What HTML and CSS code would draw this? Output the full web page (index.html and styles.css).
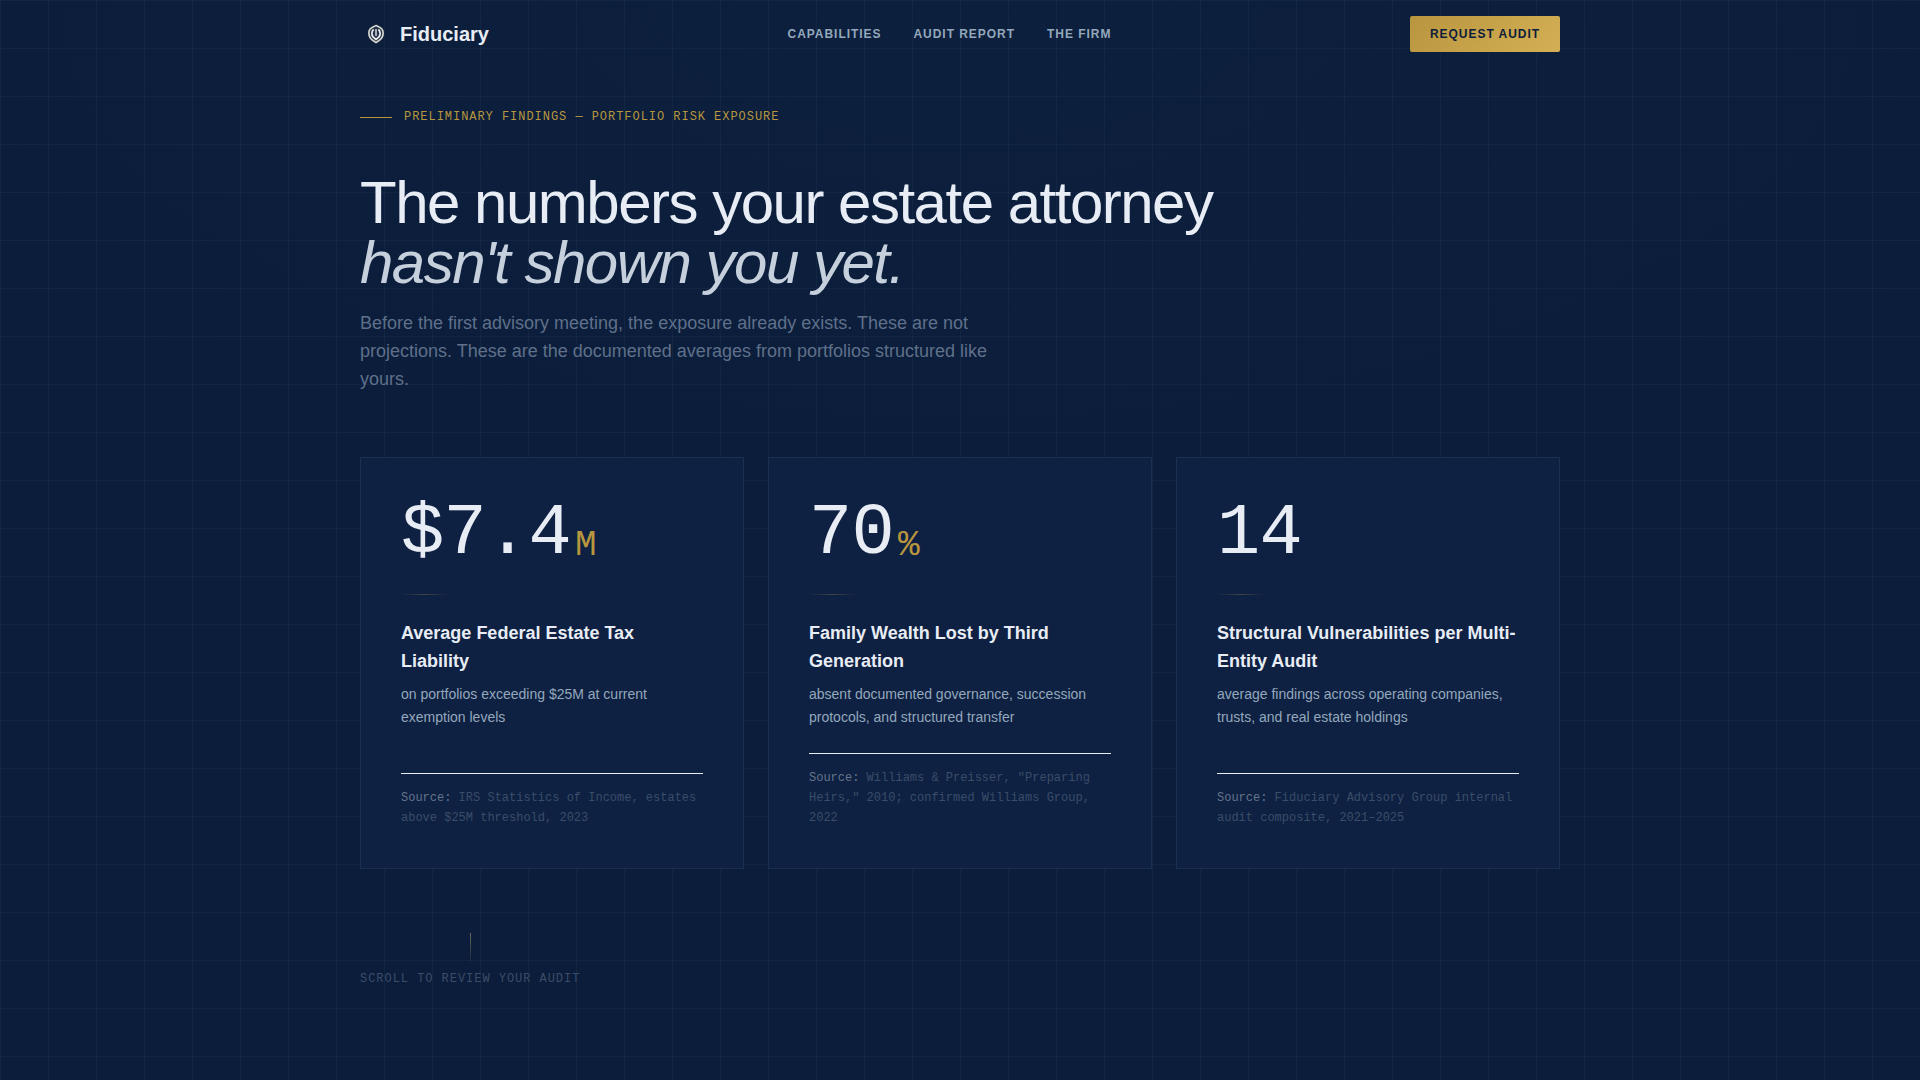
FILE: index.html
```html
<!DOCTYPE html>
<html lang="en">
<head>
<meta charset="utf-8">
<meta name="viewport" content="width=device-width, initial-scale=1">
<title>Fiduciary</title>
<link rel="stylesheet" href="styles.css">
</head>
<body>
<header class="container site-header">
  <a class="brand" href="#top">
    <svg class="brand-mark" viewBox="0 0 32 32" aria-hidden="true">
      <path d="M16 6.500l3.500 1.500c3 1.200 4.700 3.800 4.700 7 0 3.800-2 6.800-5 8.800L16 25.800l-3.200-2c-3-2-5-5-5-8.800 0-3.200 1.700-5.800 4.700-7z" fill="#22304a"/>
      <path d="M16 7.600l3.100 1.400c2.600 1.100 4 3.300 4 6 0 3.400-1.700 6-4.400 7.800L16 24.500l-2.700-1.700c-2.700-1.800-4.400-4.400-4.400-7.800 0-2.700 1.400-4.900 4-6z" fill="none" stroke="#d2d3c9" stroke-width="1.700"/>
      <path d="M13.600 11.500c-2.200 1.800-2.300 5.700-.3 7.700L16 21.300l2.700-2.100c2-2 1.900-5.900-.3-7.700" fill="none" stroke="#f1f3f3" stroke-width="1.700"/>
      <path d="M16 11v7" fill="none" stroke="#f1f3f3" stroke-width="1.300"/>
    </svg>
    <span>Fiduciary</span>
  </a>
  <nav class="site-nav" aria-label="Main">
    <a href="#capabilities">Capabilities</a>
    <a href="#audit">Audit Report</a>
    <a href="#firm">The Firm</a>
  </nav>
  <button class="cta" type="button">Request Audit</button>
</header>

<main class="container hero" id="top">
  <p class="eyebrow">Preliminary Findings — Portfolio Risk Exposure</p>
  <h1>The numbers your estate attorney<br><em>hasn't shown you yet.</em></h1>
  <p class="lede">Before the first advisory meeting, the exposure already exists. These are not projections. These are the documented averages from portfolios structured like yours.</p>

  <section class="cards" id="audit" aria-label="Findings">
    <article class="card">
      <p class="figure">$7.4<span class="unit">M</span></p>
      <h2>Average Federal Estate Tax Liability</h2>
      <p class="detail">on portfolios exceeding $25M at current exemption levels</p>
      <p class="source"><span class="source-label">Source:</span> IRS Statistics of Income, estates above $25M threshold, 2023</p>
    </article>
    <article class="card">
      <p class="figure">70<span class="unit">%</span></p>
      <h2>Family Wealth Lost by Third Generation</h2>
      <p class="detail">absent documented governance, succession protocols, and structured transfer</p>
      <p class="source"><span class="source-label">Source:</span> Williams &amp; Preisser, "Preparing Heirs," 2010; confirmed Williams Group, 2022</p>
    </article>
    <article class="card">
      <p class="figure">14</p>
      <h2>Structural Vulnerabilities per Multi-Entity Audit</h2>
      <p class="detail">average findings across operating companies, trusts, and real estate holdings</p>
      <p class="source"><span class="source-label">Source:</span> Fiduciary Advisory Group internal audit composite, 2021–2025</p>
    </article>
  </section>

  <p class="scroll-cue">Scroll to review your audit</p>
</main>
</body>
</html>
```
FILE: styles.css
```css
:root {
  --gold: #b8963e;
  --ink: #0b1d3a;
  --text: #e8edf5;
  --sans: "Liberation Sans", Arial, sans-serif;
  --mono: "Liberation Mono", "Courier New", monospace;
}

* {
  box-sizing: border-box;
}

body {
  margin: 0;
  min-height: 100vh;
  color: var(--text);
  font-family: var(--sans);
  background:
    linear-gradient(rgba(148, 178, 200, 0.05) 1px, transparent 1px) 0 0 / 48px 48px,
    linear-gradient(90deg, rgba(148, 178, 200, 0.05) 1px, transparent 1px) 0 0 / 48px 48px,
    radial-gradient(ellipse 60% 50% at 50% 0, rgba(26, 58, 92, 0.08), transparent),
    var(--ink);
}

h1,
h2,
p {
  margin: 0;
}

a {
  color: inherit;
  text-decoration: none;
}

.container {
  width: 100%;
  max-width: 1248px;
  margin: 0 auto;
  padding: 0 24px;
}

/* Header */
.site-header {
  display: flex;
  align-items: center;
  justify-content: space-between;
  padding-top: 16px;
  padding-bottom: 16px;
}

.brand {
  display: flex;
  align-items: center;
  gap: 8px;
  font-size: 20px;
  font-weight: 700;
  line-height: 28px;
}

.brand-mark {
  width: 32px;
  height: 32px;
}

.site-nav {
  display: flex;
  gap: 32px;
  color: #94a8bc;
  font-size: 12px;
  font-weight: 700;
  line-height: 16px;
  letter-spacing: 0.08em;
  text-transform: uppercase;
}

.cta {
  height: 36px;
  padding: 0 20px;
  border: 0;
  border-radius: 2px;
  color: var(--ink);
  background: linear-gradient(135deg, #b8963e, #d4af55);
  font: 700 12px/16px var(--sans);
  letter-spacing: 0.08em;
  text-transform: uppercase;
}

/* Hero */
.hero {
  padding-top: 41px;
  padding-bottom: 64px;
}

.eyebrow {
  display: flex;
  align-items: center;
  gap: 12px;
  margin-bottom: 48px;
  color: var(--gold);
  font: 12px/16px var(--mono);
  letter-spacing: 0.08em;
  text-transform: uppercase;
}

.eyebrow::before {
  content: "";
  width: 32px;
  height: 1px;
  background: var(--gold);
}

h1 {
  margin-bottom: 16px;
  font-size: 60px;
  font-weight: 400;
  line-height: 60px;
  letter-spacing: -0.025em;
}

h1 em {
  color: #c5d0dc;
}

.lede {
  max-width: 640px;
  margin-bottom: 64px;
  color: #5f708a;
  font-size: 18px;
  line-height: 28px;
}

/* Finding cards */
.cards {
  display: grid;
  grid-template-columns: repeat(auto-fit, minmax(320px, 1fr));
  gap: 24px;
}

.card {
  display: flex;
  flex-direction: column;
  padding: 40px;
  border: 1px solid #1b304e;
  background: #0e2142;
}

.figure {
  display: flex;
  align-items: flex-end;
  gap: 4px;
  font: 72px/72px var(--mono);
  letter-spacing: -0.01em;
}

.unit {
  color: var(--gold);
  font-size: 36px;
  line-height: 48px;
}

.card h2 {
  margin-bottom: 8px;
  font-size: 18px;
  font-weight: 700;
  line-height: 28px;
}

.card h2::before {
  content: "";
  display: block;
  width: 48px;
  height: 1px;
  margin: 24px 0;
  background: linear-gradient(90deg, transparent, rgba(184, 150, 62, 0.3), transparent);
}

.detail {
  margin-bottom: 24px;
  color: #94a8bc;
  font-size: 14px;
  line-height: 23px;
}

.source {
  margin-top: auto;
  padding-top: 14px;
  border-top: 1px solid var(--text);
  color: #3a4d68;
  font: 12px/20px var(--mono);
}

.source-label {
  color: #64748b;
}

/* Scroll cue */
.scroll-cue {
  display: flex;
  flex-direction: column;
  align-items: center;
  gap: 6px;
  width: fit-content;
  margin-top: 64px;
  color: #3a4d68;
  font: 12px/16px var(--mono);
  letter-spacing: 0.08em;
  text-transform: uppercase;
}

.scroll-cue::before {
  content: "";
  width: 1px;
  height: 32px;
  background: linear-gradient(#b0a070, transparent);
  opacity: 0.6;
}
```
